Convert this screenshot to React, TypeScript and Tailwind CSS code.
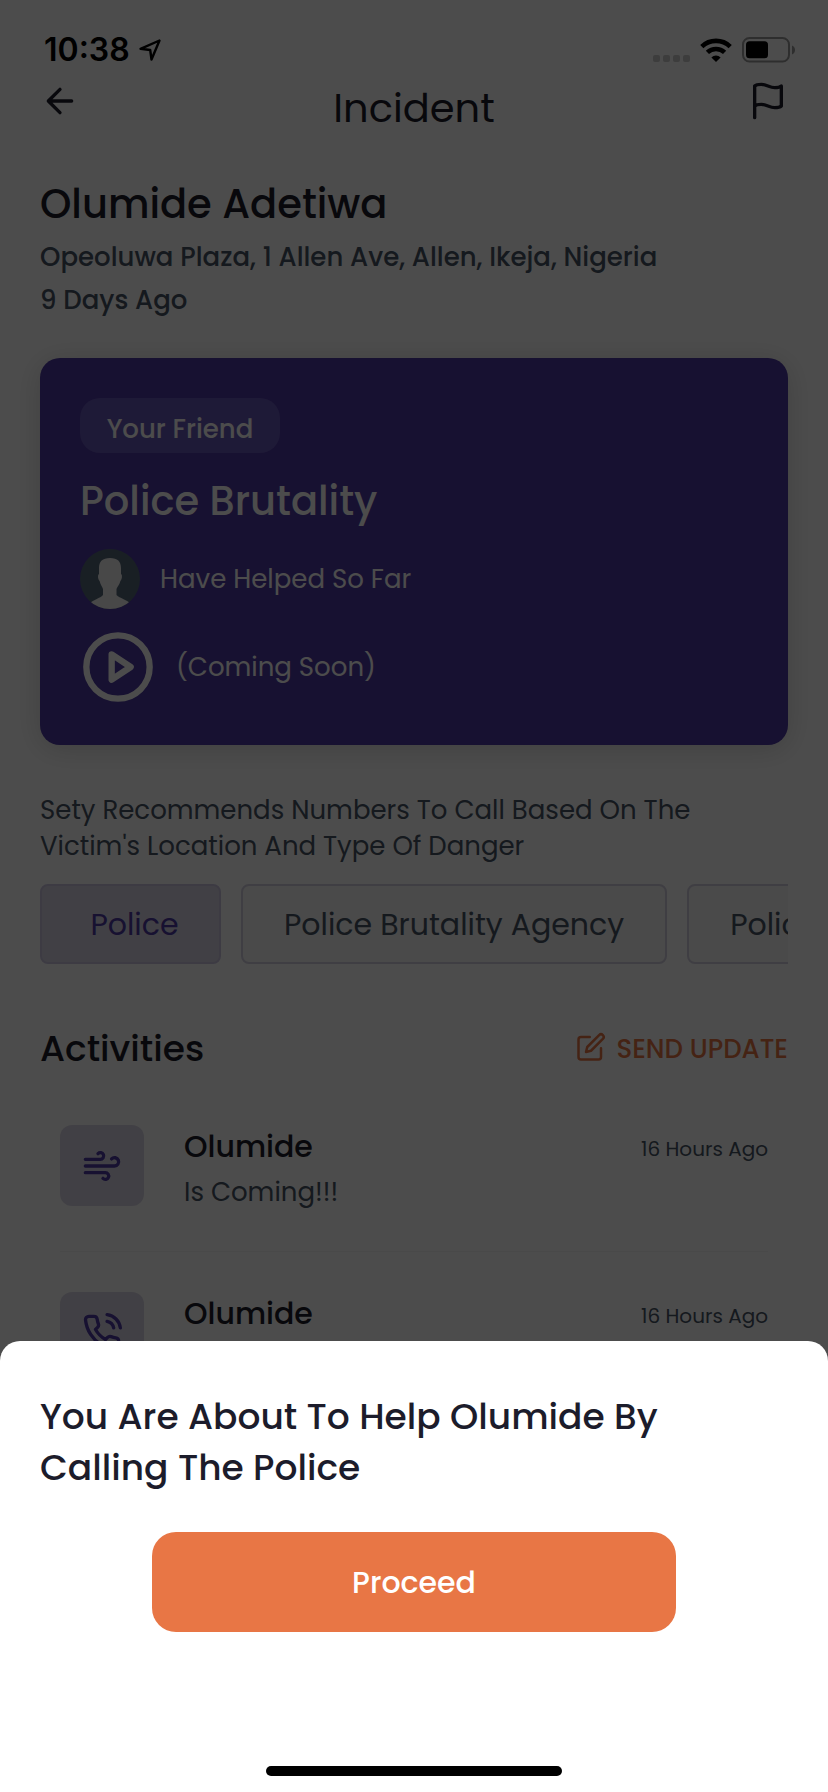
import React from "react";

const CHIPS = [
  { label: "Police", active: true },
  { label: "Police Brutality Agency", active: false },
  { label: "Police", active: false },
];

const ACTIVITIES = [
  { icon: "wind", name: "Olumide", message: "Is Coming!!!", time: "16 Hours Ago" },
  { icon: "call", name: "Olumide", message: "Is Calling", time: "16 Hours Ago" },
];

type IconProps = { className?: string; children: React.ReactNode };

function Icon({ className, children }: IconProps) {
  return (
    <svg
      viewBox="0 0 24 24"
      fill="none"
      stroke="currentColor"
      strokeWidth="2"
      strokeLinecap="round"
      strokeLinejoin="round"
      className={className}
      aria-hidden="true"
    >
      {children}
    </svg>
  );
}

function ActivityIcon({ name }: { name: string }) {
  if (name === "wind") {
    return (
      <Icon className="size-10">
        <path d="M9.59 4.59A2 2 0 1 1 11 8H2m10.59 11.41A2 2 0 1 0 14 16H2m15.73-8.27A2.5 2.5 0 1 1 19.5 12H2" />
      </Icon>
    );
  }
  return (
    <Icon className="size-10">
      <path d="M15.05 5A5 5 0 0 1 19 8.95M15.05 1A9 9 0 0 1 23 8.94m-1 7.98v3a2 2 0 0 1-2.18 2 19.79 19.79 0 0 1-8.63-3.07 19.5 19.5 0 0 1-6-6 19.79 19.79 0 0 1-3.07-8.67A2 2 0 0 1 4.11 2h3a2 2 0 0 1 2 1.72 12.84 12.84 0 0 0 .7 2.81 2 2 0 0 1-.45 2.11L8.09 9.91a16 16 0 0 0 6 6l1.27-1.27a2 2 0 0 1 2.11-.45 12.84 12.84 0 0 0 2.81.7A2 2 0 0 1 22 16.92z" />
    </Icon>
  );
}

function StatusBar() {
  return (
    <div className="flex h-[81px] items-end justify-between pr-8 pb-[11px] pl-11 text-black">
      <div className="flex items-center gap-2">
        <span className="font-['Inter',sans-serif] text-[32px] leading-10 font-semibold">10:38</span>
        <svg
          viewBox="0 0 24 24"
          className="size-6"
          fill="none"
          stroke="currentColor"
          strokeWidth="2.4"
          strokeLinejoin="round"
          aria-hidden="true"
        >
          <path d="M21.5 2.5 2.5 10.8l9.7 1.2 1.3 9.5z" />
        </svg>
      </div>
      <div className="flex h-10 items-center gap-[10px]">
        <div className="flex gap-[3px] pt-4">
          <i className="size-[7px] rounded-xs bg-black/20" />
          <i className="size-[7px] rounded-xs bg-black/20" />
          <i className="size-[7px] rounded-xs bg-black/20" />
          <i className="size-[7px] rounded-xs bg-black/20" />
        </div>
        <svg viewBox="0 0 32 24" className="h-6 w-8" fill="none" stroke="currentColor" strokeWidth="4.6" aria-hidden="true">
          <path d="M1.8 8.6a20.4 20.4 0 0 1 28.4 0" />
          <path d="M7.4 14.4a12.4 12.4 0 0 1 17.2 0" />
          <path d="M16 24l-4.6-4.6a6.6 6.6 0 0 1 9.2 0z" fill="currentColor" stroke="none" />
        </svg>
        <svg viewBox="0 0 54 26" className="h-[26px] w-[54px]" aria-hidden="true">
          <rect x="1" y="1" width="46" height="23.5" rx="6.5" fill="none" stroke="currentColor" strokeOpacity="0.4" strokeWidth="2" />
          <rect x="4" y="4.3" width="22" height="17" rx="3.5" fill="currentColor" />
          <path d="M50 8.5c4 1.5 4 7.5 0 9z" fillOpacity="0.4" />
        </svg>
      </div>
    </div>
  );
}

function IncidentCard() {
  return (
    <section className="mt-9 rounded-[20px] bg-[#4d39a3] p-10 text-white shadow-[0_4px_28px_rgba(0,0,0,0.16)]">
      <div className="flex h-[55px] w-[200px] items-center justify-center rounded-[20px] bg-[#6757b7] pt-2 text-[26px] font-medium">
        Your Friend
      </div>
      <h2 className="mt-5 text-[40px] leading-[56px] font-medium">Police Brutality</h2>
      <div className="mt-5 flex items-center gap-5">
        <svg viewBox="0 0 60 60" className="size-[60px] rounded-full" aria-hidden="true">
          <rect width="60" height="60" fill="#56697a" />
          <path
            d="M30 9c-7.500 0-11 3.500-11 10v6c-1.500.5-1.200 5.500.6 7 .8 3.500 2.600 5.500 3.400 8v6C20 49.500 14 50 9 55v5h42v-5c-5-5-11-5.500-14.500-9v-6c.8-2.500 3.100-4.500 3.900-8 1.800-1.500 2.100-6.500.6-7v-6c0-6.500-3.500-10-11-10z"
            fill="#f0f0f2"
          />
        </svg>
        <span className="text-[26px]">Have Helped So Far</span>
      </div>
      <div className="mt-5 flex items-center gap-5">
        <button aria-label="Play recording">
          <Icon className="size-[76px]">
            <circle cx="12" cy="12" r="10" />
            <path d="M10 8l6 4-6 4z" />
          </Icon>
        </button>
        <span className="text-[26px]">(Coming Soon)</span>
      </div>
    </section>
  );
}

export default function App() {
  return (
    <div className="relative h-screen overflow-hidden bg-white font-['Poppins','Inter',sans-serif] text-[#1c1c2b]">
      <StatusBar />

      <div className="px-10">
        <header className="flex h-[67px] items-start justify-between">
          <button aria-label="Back">
            <Icon className="size-10">
              <path d="M19 12H5M12 19l-7-7 7-7" />
            </Icon>
          </button>
          <h1 className="text-[40px] leading-[54px]">Incident</h1>
          <button aria-label="Report">
            <Icon className="size-10">
              <path d="M4 15s1-1 4-1 5 2 8 2 4-1 4-1V3s-1 1-4 1-5-2-8-2-4 1-4 1zM4 22v-7" />
            </Icon>
          </button>
        </header>

        <h2 className="mt-7 text-[40px] leading-[56px] font-medium">Olumide Adetiwa</h2>
        <div className="mt-1 text-[26px] leading-[43px] font-medium text-[#485465]">
          <p>Opeoluwa Plaza, 1 Allen Ave, Allen, Ikeja, Nigeria</p>
          <p>9 Days Ago</p>
        </div>

        <IncidentCard />

        <p className="mt-[47px] text-[26px] leading-9 text-[#485465]">
          Sety Recommends Numbers To Call Based On The
          <br />
          Victim's Location And Type Of Danger
        </p>

        <div className="mt-5 flex gap-5 overflow-hidden">
          {CHIPS.map((chip, index) => (
            <button
              key={index}
              className={
                chip.active
                  ? "h-20 w-[181px] shrink-0 rounded-lg border-2 border-[#cbc5e2] bg-[#dbd8e6] pl-2 text-[30px] text-[#4d39a3]"
                  : "h-20 shrink-0 rounded-lg border-2 border-[#d3d0e0] bg-[#f7f7f7] px-[41px] text-[30px] text-[#485465]"
              }
            >
              {chip.label}
            </button>
          ))}
        </div>

        <div className="mt-[57px] flex items-center justify-between">
          <h3 className="text-[36px] leading-[56px] font-medium">Activities</h3>
          <button className="flex items-start gap-[10px] text-[26px] leading-[34px] font-medium text-[#e87645]">
            <Icon className="size-[30px]">
              <path d="M11 4H4a2 2 0 0 0-2 2v14a2 2 0 0 0 2 2h14a2 2 0 0 0 2-2v-7" />
              <path d="M18.5 2.5a2.121 2.121 0 0 1 3 3L12 15l-4 1 1-4z" />
            </Icon>
            SEND UPDATE
          </button>
        </div>

        <ul className="mt-2 px-5">
          {ACTIVITIES.map((item, index) => (
            <li key={index} className="flex h-[167px] items-start border-b border-gray-100 pt-10">
              <div className="flex h-[81px] w-[84px] items-center justify-center rounded-xl bg-[#dbd8e6] text-[#4d39a3]">
                <ActivityIcon name={item.icon} />
              </div>
              <div className="ml-10 flex-1">
                <p className="text-[30px] leading-[44px] font-medium">{item.name}</p>
                <p className="text-[26px] leading-[46px] text-[#485465]">{item.message}</p>
              </div>
              <time className="text-[20px] leading-[48px] text-[#485465]">{item.time}</time>
            </li>
          ))}
        </ul>
      </div>

      {/* Backdrop and bottom sheet */}
      <div className="absolute inset-0 flex flex-col justify-end bg-black/70">
        <div
          role="dialog"
          aria-labelledby="sheet-title"
          className="flex flex-col items-center rounded-t-[20px] bg-white px-10 pt-[50px] pb-4"
        >
          <h2 id="sheet-title" className="w-full text-[36px] leading-[51px] font-medium">
            You Are About To Help Olumide By
            <br />
            Calling The Police
          </h2>
          <button className="mt-[39px] h-[100px] w-[70%] rounded-3xl bg-[#e87645] text-[30px] font-medium text-white">
            Proceed
          </button>
          <div className="mt-[134px] h-[10px] w-[296px] rounded-full bg-black" />
        </div>
      </div>
    </div>
  );
}
